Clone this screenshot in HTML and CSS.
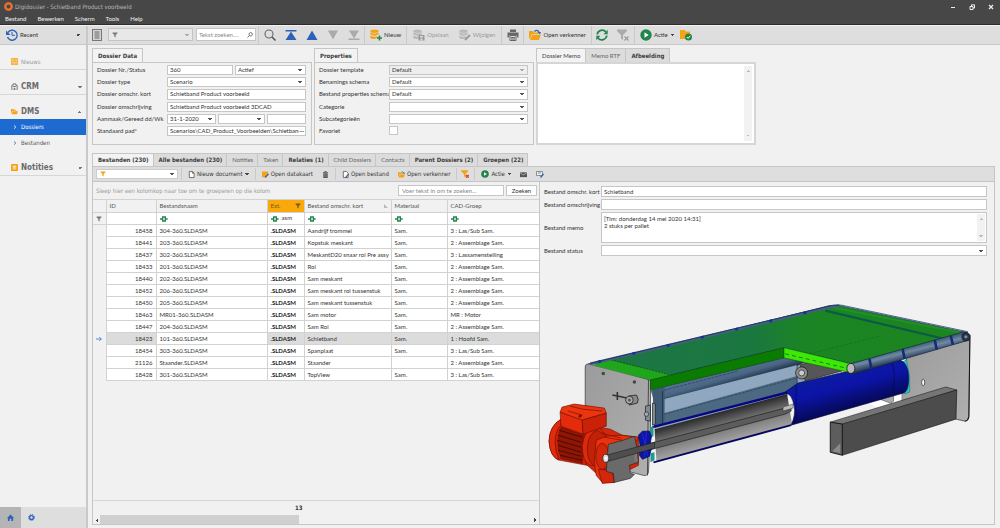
FILE: index.html
```html
<!DOCTYPE html>
<html lang="nl">
<head>
<meta charset="utf-8">
<title>Digidossier - Schietband Product voorbeeld</title>
<link rel="stylesheet" href="styles.css">
</head>
<body>
<svg class="defs" width="0" height="0" aria-hidden="true">
  <defs>
    <symbol id="i-funnel" viewBox="0 0 12 12"><path d="M1 1h10v1.600L7.300 6v5L4.700 9.500V6L1 2.600z"/></symbol>
    <symbol id="i-folder" viewBox="0 0 12 12"><path fill="#f5a314" d="M0 2h4l1 1.500h4V5H3L1 9.500H0z"/><path fill="#f5a314" d="M3.300 5.800H12L10 11H1z"/><path fill="none" stroke="#2c63b8" stroke-width="1.300" d="M5.500 2.500Q8 0 10 3"/><path fill="#2c63b8" d="M8.300 3H12L10.800 5.500z"/></symbol>
    <symbol id="i-play" viewBox="0 0 12 12"><circle cx="6" cy="6" r="5.700" fill="#22854c"/><path fill="#fff" d="M4.500 3.300L8.700 6l-4.200 2.700z"/></symbol>
    <symbol id="i-db" viewBox="0 0 12 12"><ellipse cx="4.500" cy="2.300" rx="4.200" ry="1.700"/><path d="M.3 3.500q4.200 2.300 8.400 0v2q-4.200 2.300-8.400 0zM.3 6.500q4.200 2.300 7 .6v2q-4 1.800-7 0z"/></symbol>
    <symbol id="i-eq" viewBox="0 0 12 10"><path fill="#22854c" d="M3 1h6v8H3zM0 3.700h3v2.600H0zM9 3.700h2.500v2.600H9z"/><path fill="#fff" d="M5 3h2v4H5z"/></symbol>
  </defs>
</svg>
<div class="app">
  <header class="titlebar">
    <div class="title-row">
      <svg class="i9" viewBox="0 0 12 12"><circle cx="6" cy="6" r="4.200" fill="none" stroke="#e8722c" stroke-width="3"/><circle cx="6" cy="6" r="5.400" fill="none" stroke="#e8722c" stroke-width="1" stroke-dasharray="2 1.400"/></svg>
      <h1>Digidossier - Schietband Product voorbeeld</h1>
      <div class="win">
        <button aria-label="Minimaliseren"><svg class="i6" viewBox="0 0 6 6"><path stroke="#eee" d="M1 3.500h4"/></svg></button>
        <button aria-label="Verkleinen"><svg class="i6" viewBox="0 0 6 6"><path fill="none" stroke="#eee" d="M1 2.500h3v3H1zM2.500 2V.8h3V4H4"/></svg></button>
        <button aria-label="Sluiten"><svg class="i6" viewBox="0 0 6 6"><path stroke="#eee" stroke-width="1.200" d="M1 1l4 4M5 1L1 5"/></svg></button>
      </div>
    </div>
    <nav class="menu"><a href="#">Bestand</a><a href="#">Bewerken</a><a href="#">Scherm</a><a href="#">Tools</a><a href="#">Help</a></nav>
  </header>

  <div class="body">
    <aside class="side">
      <button class="recent"><svg class="i12" viewBox="0 0 12 12"><path fill="none" stroke="#2c63b8" stroke-width="1.400" d="M2 3.500A5 5 0 1 1 1.500 8"/><path fill="#2c63b8" d="M0 1.500L0 6h4.500z"/><path fill="none" stroke="#2c63b8" d="M6 3v3.300h3"/></svg>Recent<span class="caret"></span></button>
      <nav class="nav">
        <a class="head first" href="#"><svg class="i7" viewBox="0 0 8 8"><path fill="#f2b544" d="M0 0h8v8H0z"/><path stroke="#fbe3b0" d="M1 2.500h2.500M1 5.500h6M5 2.500h2"/></svg>Nieuws</a>
        <a class="head" href="#"><svg class="i7" viewBox="0 0 8 8"><path fill="none" stroke="#666" d="M1 8V2.500h1.500V1h3v1.500H7V8M3.500 8V6h1v2M2.500 4h3"/></svg>CRM<span class="chev"></span></a>
        <a class="head open" href="#"><svg class="i7" viewBox="0 0 8 8"><path fill="#f5a314" d="M0 1h3l.6 1H6v1H2L.6 6H0zM2.300 3.700H8L6.800 7H.8z"/></svg>DMS<span class="chev up"></span></a>
        <a class="sub on" href="#"><svg class="i4" viewBox="0 0 4 4"><path fill="none" stroke="#fff" stroke-width=".8" d="M1 .3L2.800 2 1 3.700"/></svg>Dossiers</a>
        <a class="sub" href="#"><svg class="i4" viewBox="0 0 4 4"><path fill="none" stroke="#2c63b8" stroke-width=".8" d="M1 .3L2.800 2 1 3.700"/></svg>Bestanden</a>
        <a class="head" href="#"><svg class="i7" viewBox="0 0 8 8"><rect width="8" height="8" rx="1" fill="#f5a314"/><path fill="#fff" d="M2 2h4v1H2zM2 4h4v.8H2zM2 5.500h4v.6H2z"/></svg>Notities<span class="chev"></span></a>
      </nav>
      <div class="side-foot">
        <button class="on" aria-label="Start"><svg class="i7" viewBox="0 0 8 8"><path fill="#2c63b8" d="M4 .5L8 4.500H7V8H5V5.500H3V8H1V4.500H0z"/></svg></button>
        <button aria-label="Instellingen"><svg class="i7" viewBox="0 0 8 8"><circle cx="4" cy="4" r="2.200" fill="none" stroke="#2c63b8" stroke-width="1.500"/><circle cx="4" cy="4" r="3.400" fill="none" stroke="#2c63b8" stroke-width="1.100" stroke-dasharray="1.400 1.270"/></svg></button>
      </div>
    </aside>

    <main class="main">
      <div class="bar">
        <button class="listbtn" aria-label="Lijst"><svg class="i10" viewBox="0 0 10 12"><rect x=".5" y=".5" width="9" height="11" fill="#d4d4d4" stroke="#777"/><path stroke="#666" d="M2.500 3h5M2.500 5h5M2.500 7h5M2.500 9h5"/></svg></button>
        <div class="combo wide"><svg class="i6" fill="#777"><use href="#i-funnel"/></svg><select class="dim" aria-label="Filter"><option></option></select></div>
        <label class="search"><input type="text" placeholder="Tekst zoeken...." aria-label="Tekst zoeken"><svg class="i6" viewBox="0 0 6 6"><path fill="none" stroke="#555" stroke-width=".8" d="M5.400 2.300a1.700 1.700 0 1 1-3.400 0 1.700 1.700 0 0 1 3.400 0zM2.400 3.500L.5 5.500"/></svg></label>
        <div class="grp icons">
          <button aria-label="Zoeken"><svg class="i12" viewBox="0 0 12 12"><circle cx="5" cy="5" r="4" fill="none" stroke="#666" stroke-width="1.100"/><path stroke="#555" stroke-width="1.600" d="M8 8l3.500 3.500"/></svg></button>
          <button aria-label="Eerste"><svg class="i12" viewBox="0 0 12 12"><path fill="#2c63b8" d="M.5 1h11v1.500H.5zM6 2.500L11.500 11H.5z"/></svg></button>
          <button aria-label="Vorige"><svg class="i12" viewBox="0 0 12 12"><path fill="#2c63b8" d="M6 1.500L11.500 11H.5z"/></svg></button>
          <button disabled aria-label="Volgende"><svg class="i12" viewBox="0 0 12 12"><path fill="#aaa" d="M6 10.500L11 1.500H1z"/></svg></button>
          <button disabled aria-label="Laatste"><svg class="i12" viewBox="0 0 12 12"><path fill="#aaa" d="M6 9.500L11 1.500H1zM.5 9.500h11V11H.5z"/></svg></button>
        </div>
        <div class="grp"><button><svg class="i12" viewBox="0 0 12 12"><use href="#i-db" fill="#f5a314"/><path stroke="#22854c" stroke-width="1.600" d="M9.500 6.500v5M7 9h5"/></svg>Nieuw</button></div>
        <div class="grp roomy">
          <button disabled><svg class="i12" viewBox="0 0 12 12"><use href="#i-db" fill="#b9b9b9"/><path fill="#999" d="M5.500 6h6v5.500h-6z"/><path fill="#ddd" d="M7 7h3v1.500H7zM7.500 9.500h2v2h-2z"/></svg>Opslaan</button>
          <button disabled><svg class="i12" viewBox="0 0 12 12"><use href="#i-db" fill="#b9b9b9"/><path stroke="#999" stroke-width="1.800" d="M6 11l5-5"/></svg>Wijzigen</button>
        </div>
        <div class="grp icons"><button aria-label="Afdrukken"><svg class="i12" viewBox="0 0 12 12"><path fill="#666" d="M3 .5h6V3H3zM.5 3.500h11v5H10V6.500H2v2H.5z"/><path fill="none" stroke="#666" d="M3 6.500h6v5H3zM4 8.500h4M4 10h4"/></svg></button></div>
        <div class="grp"><button><svg class="i12"><use href="#i-folder"/></svg>Open verkenner</button></div>
        <div class="grp icons">
          <button aria-label="Vernieuwen"><svg class="i12" viewBox="0 0 12 12"><path fill="none" stroke="#22854c" stroke-width="1.700" d="M1.200 5.500A5 5 0 0 1 10 3M10.800 6.500A5 5 0 0 1 2 9"/><path fill="#22854c" d="M11.700.8v4.400H7.500zM.3 11.200V6.800h4.200z"/></svg></button>
          <button disabled aria-label="Filter wissen"><svg class="i12" viewBox="0 0 12 12"><path fill="#aaa" d="M0 .5h10V2L6 6v5L4 9.500V6L0 2z"/><path stroke="#999" stroke-width="1.100" d="M7.500 7.500l4 4M11.500 7.500l-4 4"/></svg></button>
        </div>
        <div class="grp"><button><svg class="i12"><use href="#i-play"/></svg>Actie<span class="caret"></span></button>
          <button class="last" aria-label="Map gereed"><svg class="i12" viewBox="0 0 12 12"><path fill="#f5a314" d="M0 1h4.500L6 2.500h4V10H0z"/><circle cx="8.500" cy="8" r="3.500" fill="#22854c"/><path fill="none" stroke="#fff" d="M6.800 8l1.300 1.300 2.200-2.500"/></svg></button></div>
      </div>

      <div class="cards">
        <section class="card">
          <div class="tabs"><button class="tab on b">Dossier Data</button></div>
          <div class="panel form f1">
            <label for="nr">Dossier Nr./Status</label><div class="pair"><input id="nr" value="360"><select aria-label="Status"><option>Actief</option></select></div>
            <label for="ty">Dossier type</label><select id="ty"><option>Scenario</option></select>
            <label for="ok">Dossier omschr. kort</label><input id="ok" value="Schietband Product voorbeeld">
            <label for="om">Dossier omschrijving</label><input id="om" value="Schietband Product voorbeeld 3DCAD">
            <label for="da">Aanmaak/Gereed dd/Wk</label><div class="trio"><select id="da"><option>31-1-2020</option></select><select aria-label="Gereed"><option></option></select><input aria-label="Week"></div>
            <label for="pa">Standaard pad*</label><div class="path"><input id="pa" value="Scenarios\CAD_Product_Voorbeelden\Schietband"><button aria-label="Bladeren">···</button></div>
          </div>
        </section>
        <section class="card">
          <div class="tabs"><button class="tab on b">Properties</button></div>
          <div class="panel form f2">
            <label for="p1">Dossier template</label><select id="p1" class="dim"><option>Default</option></select>
            <label for="p2">Benamings schema</label><select id="p2"><option>Default</option></select>
            <label for="p3">Bestand properties schema</label><select id="p3"><option>Default</option></select>
            <label for="p4">Categorie</label><select id="p4"><option></option></select>
            <label for="p5">Subcategorieën</label><select id="p5"><option></option></select>
            <label for="p6">Favoriet</label><input id="p6" type="checkbox">
          </div>
        </section>
        <section class="card">
          <div class="tabs"><button class="tab on">Dossier Memo</button><button class="tab">Memo RTF</button><button class="tab b">Afbeelding</button></div>
          <div class="panel memo"><textarea aria-label="Dossier Memo"></textarea><div class="vbar"></div></div>
        </section>
      </div>

      <section class="files">
        <div class="tabs">
          <button class="tab on b">Bestanden (230)</button><button class="tab b">Alle bestanden (230)</button><button class="tab">Notities</button><button class="tab">Taken</button><button class="tab b">Relaties (1)</button><button class="tab">Child Dossiers</button><button class="tab">Contacts</button><button class="tab b">Parent Dossiers (2)</button><button class="tab b">Groepen (22)</button>
        </div>
        <div class="panel work">
          <div class="subbar">
            <div class="combo"><svg class="i6" fill="#f5a314"><use href="#i-funnel"/></svg><select aria-label="Bestandsfilter"><option></option></select></div>
            <div class="grp"><button><svg class="i7" viewBox="0 0 8 8"><path fill="#fff" stroke="#555" stroke-width=".9" d="M1.500.5h3.500l2 2v5H1.500zM5 .5v2h2"/></svg>Nieuw document<span class="caret"></span></button></div>
            <div class="grp"><button><svg class="i7" viewBox="0 0 8 8"><path fill="#f5a314" d="M0 .5h7v3L4 7H0z"/><path stroke="#2c63b8" stroke-width="1.500" d="M3.500 7.500l4-4"/></svg>Open datakaart</button><button aria-label="Verwijderen"><svg class="i7" viewBox="0 0 8 8"><path fill="#555" d="M3 0h2v1h2v1H1V1h2zM1.500 2.500h5V8h-5z"/><path stroke="#aaa" stroke-width=".6" d="M3.200 3.500V7M4.800 3.500V7"/></svg></button></div>
            <div class="grp"><button><svg class="i7" viewBox="0 0 8 8"><path fill="#fff" stroke="#555" stroke-width=".9" d="M1.500.5H5l2 2v5H1.500z"/><path stroke="#2c63b8" stroke-width="1.400" d="M4 7.500l3.500-4"/></svg>Open bestand</button><button><svg class="i7"><use href="#i-folder"/></svg>Open verkenner</button></div>
            <div class="grp slim"><button aria-label="Filter wissen"><svg class="i8" viewBox="0 0 8 8"><path fill="#f5a314" d="M0 .3h7v1L4.500 4v3.500L3 6.500V4L0 1.300z"/><path stroke="#d8352a" stroke-width="1.200" d="M5 5l2.700 2.700M7.700 5L5 7.700"/></svg></button></div>
            <div class="grp"><button><svg class="i8"><use href="#i-play"/></svg>Actie<span class="caret"></span></button><button aria-label="E-mail"><svg class="i7" viewBox="0 0 8 8"><path fill="#555" d="M0 1.500h8v5.500H0z"/><path fill="none" stroke="#ddd" stroke-width=".7" d="M0 2l4 2.500L8 2"/></svg></button><button aria-label="Bewerken"><svg class="i8" viewBox="0 0 8 8"><path fill="#eee" stroke="#777" stroke-width=".8" d="M.5 1.500h6v4h-6zM2 3h3"/><path stroke="#2c63b8" stroke-width="1.300" d="M4.500 7.500l3-3.500"/></svg></button></div>
          </div>
          <div class="split">
            <div class="list">
              <div class="find"><span>Sleep hier een kolomkop naar toe om te groeperen op die kolom</span><input type="text" placeholder="Voer tekst in om te zoeken..." aria-label="Zoektekst"><button>Zoeken</button></div>
              <table>
                <colgroup><col class="c0"><col class="c1"><col class="c2"><col class="c3"><col class="c4"><col class="c5"><col></colgroup>
                <thead>
                  <tr><th></th><th>ID</th><th>Bestandsnaam</th><th class="hot"><div>Ext.<svg class="i6" fill="#735a1c"><use href="#i-funnel"/></svg></div></th><th><div>Bestand omschr. kort<svg class="i4" viewBox="0 0 4 4"><path fill="#bbb" d="M0 0l4 4H0z"/></svg></div></th><th>Materiaal</th><th>CAD-Groep</th></tr>
                  <tr class="flt"><td><svg class="i6" fill="#777"><use href="#i-funnel"/></svg></td><td></td><td><svg class="i8"><use href="#i-eq"/></svg></td><td><svg class="i8"><use href="#i-eq"/></svg> &nbsp;asm</td><td><svg class="i8"><use href="#i-eq"/></svg></td><td><svg class="i8"><use href="#i-eq"/></svg></td><td><svg class="i8"><use href="#i-eq"/></svg></td></tr>
                </thead>
                <tbody>
                  <tr><td></td><td>18458</td><td>304-360.SLDASM</td><td>.SLDASM</td><td>Aandrijf trommel</td><td>Sam.</td><td>3 : Las/Sub Sam.</td></tr>
                  <tr><td></td><td>18441</td><td>203-360.SLDASM</td><td>.SLDASM</td><td>Kopstuk meskant</td><td>Sam.</td><td>2 : Assemblage Sam.</td></tr>
                  <tr><td></td><td>18437</td><td>302-360.SLDASM</td><td>.SLDASM</td><td>MeskantD20 snaar rol Pre assy</td><td>Sam.</td><td>3 : Lassamenstelling</td></tr>
                  <tr><td></td><td>18433</td><td>201-360.SLDASM</td><td>.SLDASM</td><td>Rol</td><td>Sam.</td><td>2 : Assemblage Sam.</td></tr>
                  <tr><td></td><td>18440</td><td>202-360.SLDASM</td><td>.SLDASM</td><td>Sam meskant</td><td>Sam.</td><td>2 : Assemblage Sam.</td></tr>
                  <tr><td></td><td>18452</td><td>206-360.SLDASM</td><td>.SLDASM</td><td>Sam meskant rol tussenstuk</td><td>Sam.</td><td>2 : Assemblage Sam.</td></tr>
                  <tr><td></td><td>18450</td><td>205-360.SLDASM</td><td>.SLDASM</td><td>Sam meskant tussenstuk</td><td>Sam.</td><td>2 : Assemblage Sam.</td></tr>
                  <tr><td></td><td>18463</td><td>MR01-360.SLDASM</td><td>.SLDASM</td><td>Sam motor</td><td>Sam.</td><td>MR : Motor</td></tr>
                  <tr><td></td><td>18447</td><td>204-360.SLDASM</td><td>.SLDASM</td><td>Sam Rol</td><td>Sam.</td><td>2 : Assemblage Sam.</td></tr>
                  <tr class="cur"><td><svg class="i6" viewBox="0 0 6 6"><path fill="none" stroke="#3c86cc" stroke-width=".9" d="M0 3h5.300M3.300 1l2 2-2 2"/></svg></td><td>18423</td><td>101-360.SLDASM</td><td>.SLDASM</td><td>Schietband</td><td>Sam.</td><td>1 : Hoofd Sam.</td></tr>
                  <tr><td></td><td>18454</td><td>303-360.SLDASM</td><td>.SLDASM</td><td>Spanplaat</td><td>Sam.</td><td>3 : Las/Sub Sam.</td></tr>
                  <tr><td></td><td>21126</td><td>Staander.SLDASM</td><td>.SLDASM</td><td>Staander</td><td></td><td>2 : Assemblage Sam.</td></tr>
                  <tr><td></td><td>18428</td><td>301-360.SLDASM</td><td>.SLDASM</td><td>TopView</td><td>Sam.</td><td>3 : Las/Sub Sam.</td></tr>
                </tbody>
              </table>
              <div class="sum">13</div>
              <div class="hbar"><i class="l"></i><div class="rail"><div class="thumb"></div></div><i class="r"></i></div>
            </div>
            <div class="detail">
              <div class="form f3">
                <label for="d1">Bestand omschr. kort</label><input id="d1" value="Schietband">
                <label for="d2">Bestand omschrijving</label><input id="d2">
                <label for="d3">Bestand memo</label><div class="note"><textarea id="d3">[Tim: donderdag 14 mei 2020 14:31]
2 stuks per pallet</textarea><div class="vbar"></div></div>
                <label for="d4">Bestand status</label><select id="d4"><option></option></select>
              </div>
              <svg class="model" viewBox="542 258 452 266" role="img" aria-label="3D-model van de schietband">
                <defs>
                  <linearGradient id="gTop" x1="0" x2="1"><stop offset="0" stop-color="#1d7646"/><stop offset=".42" stop-color="#1b7740"/><stop offset=".56" stop-color="#1b8424"/><stop offset="1" stop-color="#1c851f"/></linearGradient>
                  <linearGradient id="gDrum" gradientUnits="userSpaceOnUse" x1="700" y1="416" x2="709" y2="450"><stop offset="0" stop-color="#1c1c1c"/><stop offset=".4" stop-color="#6b6b6b"/><stop offset="1" stop-color="#a8a8a8"/></linearGradient>
                  <linearGradient id="gTube" gradientUnits="userSpaceOnUse" x1="845" y1="370" x2="856" y2="410"><stop offset="0" stop-color="#0d1c9c"/><stop offset=".4" stop-color="#0c14a8"/><stop offset="1" stop-color="#050850"/></linearGradient>
                  <linearGradient id="gRol" gradientUnits="userSpaceOnUse" x1="720" y1="374" x2="724" y2="388"><stop offset="0" stop-color="#53708e"/><stop offset=".5" stop-color="#4a6684"/><stop offset="1" stop-color="#1d3046"/></linearGradient>
                  <linearGradient id="gEdge" gradientUnits="userSpaceOnUse" x1="908" y1="348" x2="911" y2="360"><stop offset="0" stop-color="#3f5873"/><stop offset=".4" stop-color="#7089a5"/><stop offset="1" stop-color="#22344c"/></linearGradient>
                  <linearGradient id="gPlate" x1="0" x2="1" y2="1"><stop offset="0" stop-color="#9b9b9b"/><stop offset="1" stop-color="#b0b0b0"/></linearGradient>
                </defs>
                <path fill="url(#gPlate)" stroke="#222" stroke-width=".6" d="M907 358L970 341 969 416Q968 422 965 422L956 420 956 392 902 402 902 392z"/>
                <path fill="#fff" d="M868 403L882 399 902 393 902 402 880 410z"/>
                <path fill="#aaa" stroke="#333" stroke-width=".5" d="M880 400L894 395 894 402Q892 405 888 403z"/>
                <path stroke="#111" stroke-width="1" fill="none" d="M970 336L969 418Q968 422 965 422"/>
                <ellipse cx="923.500" cy="383.500" rx="1.500" ry="3.300" fill="#fff" stroke="#222" stroke-width=".7"/>
                <path fill="#22c4c4" stroke="#0a6060" stroke-width=".4" d="M903 363l4-2 3 16v16l-5 2z"/>
                <path fill="url(#gPlate)" stroke="#222" stroke-width=".6" d="M590 365L652 381 652 430 650 473Q649 477 645 476L622 470 587 420 587 368Q587 365 590 365z"/>
                <path stroke="#333" stroke-width=".8" d="M650 381L649 476"/>
                <path fill="#8ea7bf" d="M654 390L800 356 842 367 798 386 798 394 782 398 656 430z"/>
                <path fill="url(#gRol)" d="M652 391L786 358 806 363 798 367 656 403z"/>
                <path fill="#8fa8c0" d="M666 400L798 366 798 376 666 412z"/>
                <path fill="#4d6881" d="M656 417L666 414 798 377 798 392 656 427z"/>
                <path fill="#3f5a74" d="M654 391L666 388 666 425 656 427z"/>
                <path stroke="#273f5c" stroke-width=".7" stroke-dasharray="3 1" d="M666 415L798 379M666 391L740 372"/>
                <path stroke="#1a2d44" stroke-width=".7" d="M664 392v32M798 366v24"/>
                <path fill="url(#gDrum)" d="M656 430L788 395 793 425 658 463z"/>
                <path fill="none" stroke="#070780" stroke-width="2.400" d="M654 428L790 393"/>
                <path fill="none" stroke="#070760" stroke-width="1.800" d="M655 463L792 426"/>
                <path fill="#5c5c5c" stroke="#171717" stroke-width=".6" d="M610 455L786 409 792 407 792 412 786 415 612 461z"/>
                <path fill="#bbb" stroke="#222" stroke-width=".4" d="M784 408l10-3v4l-10 3z"/>
                <path fill="#1e9a90" d="M652 428l3-1v10l-3 1zM652 454l4-1v8l-4 2z"/>
                <path fill="url(#gTube)" stroke="#05063c" stroke-width=".6" d="M786 393L799 384 862 369 900 361Q909 364 909 380 909 392 904 394L792 426Q797 415 795 407 793 395 786 393z"/>
                <path fill="none" stroke="#04063a" stroke-width=".6" d="M892 362q5 14 1 33M797 386v37"/>
                <path fill="#565656" stroke="#111" stroke-width=".5" d="M801 366L818 361 845 368 843 372 806 382z"/>
                <circle cx="802.500" cy="374" r="6" fill="#8d8d8d" stroke="#111" stroke-width=".7"/><circle cx="802.500" cy="374" r="3" fill="#ccc" stroke="#222" stroke-width=".7"/>
                <path fill="url(#gTop)" stroke="#0d3550" stroke-width=".7" d="M597 365L830 307 840 307 968 334 852 365 785 349 652 381z"/>
                <path fill="#1fa61c" d="M594 366L611 361 675 376 652 381z"/>
                <path stroke="#0c4a20" stroke-width=".8" stroke-dasharray="2 1" d="M613 361L676 377"/>
                <path stroke="#0b5a48" stroke-width="2.200" d="M826 312L944 340"/>
                <path stroke="#209328" stroke-width="1.600" d="M834 309L962 334"/>
                <path stroke="#12652c" stroke-width=".6" stroke-dasharray="3 1.500" d="M806 356L882 337"/>
                <path fill="none" stroke="#44617f" stroke-width="2.600" d="M592 365L832 308 840 307"/>
                <path fill="none" stroke="#14275c" stroke-width=".7" d="M590 365L834 306.500 842 306.500 968 333"/>
                <path stroke="#1a2f9c" stroke-width="2.600" stroke-dasharray="3 32" d="M600 363L832 308"/>
                <path fill="#0b7c02" stroke="#063d04" stroke-width=".5" d="M652 381L785 349 785 359 652 391z"/>
                <path fill="#3ee806" stroke="#0b5a04" stroke-width=".5" d="M785 349L848 364 848 373 785 359z"/>
                <path stroke="#0a7a10" stroke-width=".9" stroke-dasharray="4 3" d="M786 355L846 369"/>
                <path fill="url(#gEdge)" stroke="#12203a" stroke-width=".6" d="M851 365L964 333Q971 335 970 341L854 375z"/>
                <path stroke="#142c78" stroke-width="2.600" d="M870 360l2 10M903 350l2 10M935 341l2 10M951 337l2 9"/>
                <circle cx="966" cy="338" r="4" fill="#27364e" stroke="#111" stroke-width=".6"/><circle cx="966" cy="338" r="1.500" fill="#8193aa"/>
                <ellipse cx="851.500" cy="369.500" rx="4" ry="5" fill="#b9b9b9" stroke="#111" stroke-width=".8"/>
                <path fill="#757575" stroke="#222" stroke-width=".6" d="M831 423L946 388 957 391 843 425z"/>
                <path fill="#4c4c4c" stroke="#1a1a1a" stroke-width=".6" d="M843 425L957 391 956 420 843 456z"/>
                <path fill="#5d5d5d" stroke="#111" stroke-width=".9" d="M831 423L843 425 843 456 831 453z"/>
                <path fill="#898989" d="M833 452L841 444 841 454z"/>
                <circle cx="605" cy="374.500" r="1.700" fill="#444"/><circle cx="636" cy="383" r="1.700" fill="#444"/>
                <path fill="none" stroke="#333" stroke-width="1.600" d="M614 396l10 2 8 2M619 393v8"/>
                <path fill="#8a8a8a" stroke="#222" stroke-width=".8" d="M630 397l8-1q3 4 1 8l-8 2z"/><circle cx="631" cy="401" r="3.800" fill="#aaa" stroke="#222" stroke-width=".8"/><circle cx="631" cy="401" r="1.500" fill="#555"/>
                <path fill="#7d8b96" stroke="#222" stroke-width=".7" d="M647 407l5-1v16l-5-1zM654 404l3 1v20l-3 1z"/><circle cx="648" cy="415" r="2.200" fill="#aaa" stroke="#222" stroke-width=".6"/>
                <g stroke="#6a0c02" stroke-width=".6">
                  <path fill="#c92208" d="M563 420Q552 426 551 442 552 458 562 461L594 467 606 434 585 424z"/>
                  <path fill="#e02b0c" d="M563 420Q551 427 551 442 552 458 561 461 557 452 557 442 558 430 563 426z"/>
                  <path fill="#8f1604" d="M563 428L585 436 584 464 563 459Q557 444 563 428z"/>
                  <path fill="#d4260a" d="M586 436L600 428 612 430 624 436 640 438 640 466 616 478 598 474 588 465z"/>
                  <path fill="#dd2a0c" d="M596 428Q586 430 584 447 584 462 592 466L600 466 606 434Q602 428 596 428z"/>
                  <path fill="#c32008" d="M599 431Q590 434 589 449 589 462 596 467L604 460 608 436z"/>
                  <path fill="#e42c0c" d="M562 413L584 421 585 435 563 427z"/>
                  <path fill="#ea350e" d="M562 413L564 408 576 405 606 409 608 414 584 421z"/>
                  <path fill="#c92208" d="M584 421L608 414 608 427 585 435z"/>
                  <path fill="#e8330d" d="M598 441L608 437 622 436 640 438 638 442 612 447 606 470 616 474 616 483 604 483 598 476 596 462z"/>
                  <ellipse cx="604" cy="457" rx="6.500" ry="13" fill="#d4260a"/>
                  <path fill="#d4260a" d="M600 470l14 1 2 12-12 1z"/>
                </g>
                <path stroke="#4e0a02" stroke-width="1" d="M561 431l23 7M560 436l23 7M559 441l24 7M560 446l23 7M560 451l23 6M562 456l22 5"/>
                <path fill="none" stroke="#8c1404" stroke-width=".8" d="M572 407l12 3 20 2M570 412l14 4M580 418l4-2M603 434l20 5M606 438l18 3"/>
                <circle cx="582" cy="417" r="1.500" fill="#7a1003"/>
                <path fill="#0c14a8" stroke="#060a50" stroke-width=".7" d="M640 436l4-4 7 0 2 5-1 6 1 6-2 8-7 3-3-4 1-8z"/>
                <path stroke="#2630d0" stroke-width=".8" d="M644 434l5 22M648 433l-2 25"/>
                <path fill="#6a6a6a" stroke="#222" stroke-width=".6" d="M610 445L625 441 636 437 638 446 640 463 631 466 632 474 636 475 632 479 616 483 615 474 608 472z"/>
                <path fill="#c0c0c0" stroke="none" d="M636 452h3v10h-3z" opacity=".2"/>
                <path fill="#4e4e4e" stroke="#151515" stroke-width=".5" d="M608 456L656 443 656 449 610 462z"/>
                <ellipse cx="607.500" cy="459" rx="3" ry="4" fill="#ddd" stroke="#222" stroke-width=".8"/><circle cx="607.500" cy="459" r="1.400" fill="#fff"/>
              </svg>
            </div>
          </div>
        </div>
      </section>
    </main>
  </div>
</div>
</body>
</html>
```
FILE: styles.css
```css
* { box-sizing: border-box; }
body { margin: 0; background: #f1f1f1; color: #333; font: 6px/8px Lato, "Liberation Sans", sans-serif; }
button, input, select, textarea { font: inherit; color: inherit; margin: 0; padding: 0; border: 0; background: none; border-radius: 0; outline: 0; min-width: 0; }
select { appearance: none; }
textarea { resize: none; display: block; overflow: hidden; }
a { color: inherit; text-decoration: none; }
svg { flex: none; display: block; overflow: visible; }
.defs { position: absolute; }
.i4 { width: 4px; height: 4px; }
.i6 { width: 6px; height: 6px; }
.i7 { width: 7px; height: 7px; }
.i8 { width: 8px; height: 8px; }
.i9 { width: 9px; height: 9px; }
.i10 { width: 10px; height: 12px; }
.i12 { width: 12px; height: 12px; }

.app { min-height: 100vh; display: flex; flex-direction: column; }
.titlebar { background: #474747; border-bottom: 1px solid #2c2c2c; height: 25px; padding: 1px 4px 0; color: #f2f2f2; }
.title-row { display: flex; align-items: center; height: 11px; gap: 2px; }
h1 { font: 6px/8px "DejaVu Sans Condensed", "DejaVu Sans", sans-serif; color: #b9b9b9; margin: 0; flex: 1; }
.win { display: flex; gap: 13px; padding-right: 2px; }
.menu { display: flex; gap: 11px; padding: 3px 1px 0; }

.body { flex: 1; display: flex; padding-top: 1px; }
.side { flex: none; width: 88px; border-right: 2px solid #c9c9c9; display: flex; flex-direction: column; }
.recent { height: 19px; background: #dedede; border-bottom: 1px solid #c8c8c8; display: flex; align-items: center; gap: 2px; padding: 0 6px; }
.caret { width: 4px; height: 2px; background: conic-gradient(from 315deg at 50% 100%, #444 90deg, transparent 0); }
.recent .caret { margin-left: auto; }
.nav { flex: 1; font-family: "DejaVu Sans Condensed", "DejaVu Sans", sans-serif; }
.head { display: flex; align-items: center; gap: 3px; height: 25px; padding: 9px 4px 0 11px; border-bottom: 1px solid #d6d6d6; font-weight: bold; font-size: 8px; color: #6a6a6a; }
.head.first { font-weight: normal; font-size: 6px; color: #999; }
.head.open { border-bottom: 0; height: 24px; }
.chev { margin-left: auto; width: 4px; height: 2px; background: conic-gradient(from 315deg at 50% 100%, #777 90deg, transparent 0); }
.chev.up { background: conic-gradient(from 135deg at 50% 0, #777 90deg, transparent 0); }
.sub { display: flex; align-items: center; gap: 4px; height: 16px; padding-left: 13px; color: #555; }
.sub.on { background: #1d6bd0; color: #fff; }
.side-foot { display: flex; height: 21px; background: #dedede; }
.side-foot button { width: 21px; display: grid; place-items: center; }
.side-foot .on { background: #b5b5b5; }

.main { flex: 1; min-width: 0; display: flex; flex-direction: column; }
.bar { height: 19px; background: #dedede; border-bottom: 1px solid #c8c8c8; display: flex; align-items: stretch; padding-left: 4px; }
.bar button, .subbar button { display: flex; align-items: center; gap: 2px; white-space: nowrap; }
.bar button:disabled { color: #9a9a9a; }
.bar .grp, .subbar .grp { display: flex; align-items: center; border-left: 1px solid #c9c9c9; }
.bar .grp { padding: 0 5px; }
.bar .icons { padding: 0; }
.bar .icons button { width: 21px; justify-content: center; }
.bar .roomy { gap: 10px; padding: 0 6px; }
.bar .last { margin-left: 6px; }
.listbtn { padding-right: 6px; }
.combo { display: flex; align-items: center; background: #fff; border: 1px solid #c4c4c4; padding-left: 3px; }
.combo select { flex: 1; align-self: stretch; border: 0; }
.bar .combo, .bar .search { margin: 2px 3px 3px 0; }
.combo.wide { width: 85px; background: #e8e8e8; }
.bar .search { width: 60px; margin-right: 2px; display: flex; align-items: center; background: #fff; border: 1px solid #c4c4c4; padding: 0 2px; }
.search input { width: 100%; }
::placeholder { color: #888; opacity: 1; }

.cards { display: flex; gap: 2px; padding: 3px 4px 0; }
.card { flex: 0 1 220px; min-width: 0; display: flex; flex-direction: column; }
.tabs { display: flex; }
.tab { height: 14px; padding: 0 5px; border: 1px solid #c6c6c6; border-left-width: 0; border-bottom: 0; background: #dcdcdc; color: #666; white-space: nowrap; }
.tab:first-child { border-left-width: 1px; }
.tab.on { background: #f3f3f3; color: #444; }
.tab.b { font-family: "DejaVu Sans Condensed", "DejaVu Sans", sans-serif; font-weight: bold; color: #3c3c3c; }
.panel { border: 1px solid #c6c6c6; }
.card .panel { height: 83px; }
.form { display: grid; gap: 2px 4px; align-items: stretch; }
.form label { align-self: center; white-space: nowrap; }
.f1, .f2 { grid-auto-rows: 1fr; padding: 2px 5px 8px 4px; }
.f1 { grid-template-columns: 66px 1fr; }
.f2 { grid-template-columns: 70px 1fr; gap: 2px 0; }
.form input, .form select, .form textarea { width: 100%; background: #fff; border: 1px solid #c6c6c6; padding: 0 2px; }
.form select, .combo select { background: conic-gradient(from 315deg at 50% 100%, #555 90deg, transparent 0) right 3px center / 4px 2px no-repeat #fff; }
.form .dim, .combo .dim { background: conic-gradient(from 315deg at 50% 100%, #aaa 90deg, transparent 0) right 3px center / 4px 2px no-repeat #eee; }
.combo .dim { background-color: #e8e8e8; }
.pair { display: grid; grid-template-columns: 66px 1fr; gap: 2px; }
.trio { display: grid; grid-template-columns: 49px 1fr 39px; gap: 2px; }
.path { display: flex; background: #fff; border: 1px solid #c6c6c6; padding-right: 1px; }
.form .path input { border: 0; padding: 0 0 0 2px; }
.form input[type=checkbox] { appearance: none; width: 9px; height: 9px; align-self: center; }
.memo { display: flex; background: #fff; border: 2px solid #d6d6d6; padding: 2px; }
.memo textarea { flex: 1; }
.vbar { width: 8px; background: conic-gradient(from 135deg at 50% 0, #bbb 90deg, transparent 0) center 4px / 4px 2px no-repeat, conic-gradient(from 315deg at 50% 100%, #bbb 90deg, transparent 0) center bottom 4px / 4px 2px no-repeat, #f2f2f2; }

.files { flex: 1; display: flex; flex-direction: column; padding: 8px 5px 3px 4px; }
.files .tab { height: 13px; padding: 0 4px 0 5px; }
.work { flex: 1; display: flex; flex-direction: column; }
.subbar { height: 15px; background: #dedede; border-bottom: 1px solid #c4c4c4; display: flex; padding-left: 3px; font-family: "DejaVu Sans Condensed", "DejaVu Sans", sans-serif; }
.subbar .combo { width: 82px; margin: 2px 3px 2px 0; border-color: #ccc; }
.subbar .grp { gap: 9px; padding: 0 6px; margin: 1px 0; }
.subbar .slim { padding: 0 5px 0 4px; }
.split { flex: 1; display: grid; grid-template-columns: 447fr 454fr; }
.list { border-right: 1px solid #c6c6c6; display: flex; flex-direction: column; min-width: 0; }
.find { display: flex; align-items: center; gap: 2px; height: 17px; padding: 0 2px 0 3px; }
.find span { flex: 1; color: #999; white-space: nowrap; font-family: "DejaVu Sans Condensed", "DejaVu Sans", sans-serif; }
.find input { width: 106px; height: 11px; background: #fff; border: 1px solid #c6c6c6; padding: 0 3px; }
.find button { width: 31px; height: 11px; background: #fff; border: 1px solid #c6c6c6; }

table { width: 100%; table-layout: fixed; border-collapse: collapse; }
.c0 { width: 13px; } .c1 { width: 50px; } .c2 { width: 111px; } .c3 { width: 37px; } .c4 { width: 87px; } .c5 { width: 56px; }
th, td { height: 12px; padding: 0 3px; border: 1px solid #d2d2d2; text-align: left; font-weight: normal; line-height: 8px; white-space: nowrap; overflow: hidden; }
th { height: 13px; color: #555; }
th div { display: flex; justify-content: space-between; align-items: center; }
th.hot { background: #fba90a; color: #735a1c; }
td svg { display: inline-block; vertical-align: middle; }
tbody td, .flt td { background: #fff; }
.flt td { height: 12px; }
tbody td:first-child, .flt td:first-child, th:first-child { background: #f1f1f1; border-left: 0; padding: 0; text-align: center; }
tbody td:first-child { border-top: 0; border-bottom: 0; }
tbody td:nth-child(2) { text-align: right; }
tbody td:nth-child(4) { font-weight: bold; color: #222; }
th:last-child, td:last-child { border-right: 0; }
.cur td:not(:first-child):not(:nth-child(3)) { background: #dcdcdc; }
.sum { margin-top: auto; height: 15px; line-height: 14px; border-top: 1px solid #d6d6d6; padding-left: 202px; font-family: "DejaVu Sans Condensed", "DejaVu Sans", sans-serif; font-weight: bold; }
.hbar { display: flex; align-items: center; gap: 2px; height: 9px; padding: 0 3px; }
.hbar i { width: 2px; height: 4px; }
.hbar .l { background: conic-gradient(from 45deg at 0 50%, #444 90deg, transparent 0); }
.hbar .r { background: conic-gradient(from 225deg at 100% 50%, #444 90deg, transparent 0); }
.rail { flex: 1; align-self: stretch; }
.thumb { width: 46%; height: 100%; background: #d0d0d0; }

.detail { display: flex; flex-direction: column; min-width: 0; }
.f3 { grid-template-columns: 53px 1fr; grid-template-rows: 11px 11px 31px 11px; padding: 4px 7px 0 4px; }
.note { display: flex; background: #fff; border: 1px solid #c6c6c6; padding: 1px; }
.form .note textarea { flex: 1; border: 0; line-height: 7px; padding: 1px; }
.model { width: 100%; flex: 1; min-height: 0; }
```
